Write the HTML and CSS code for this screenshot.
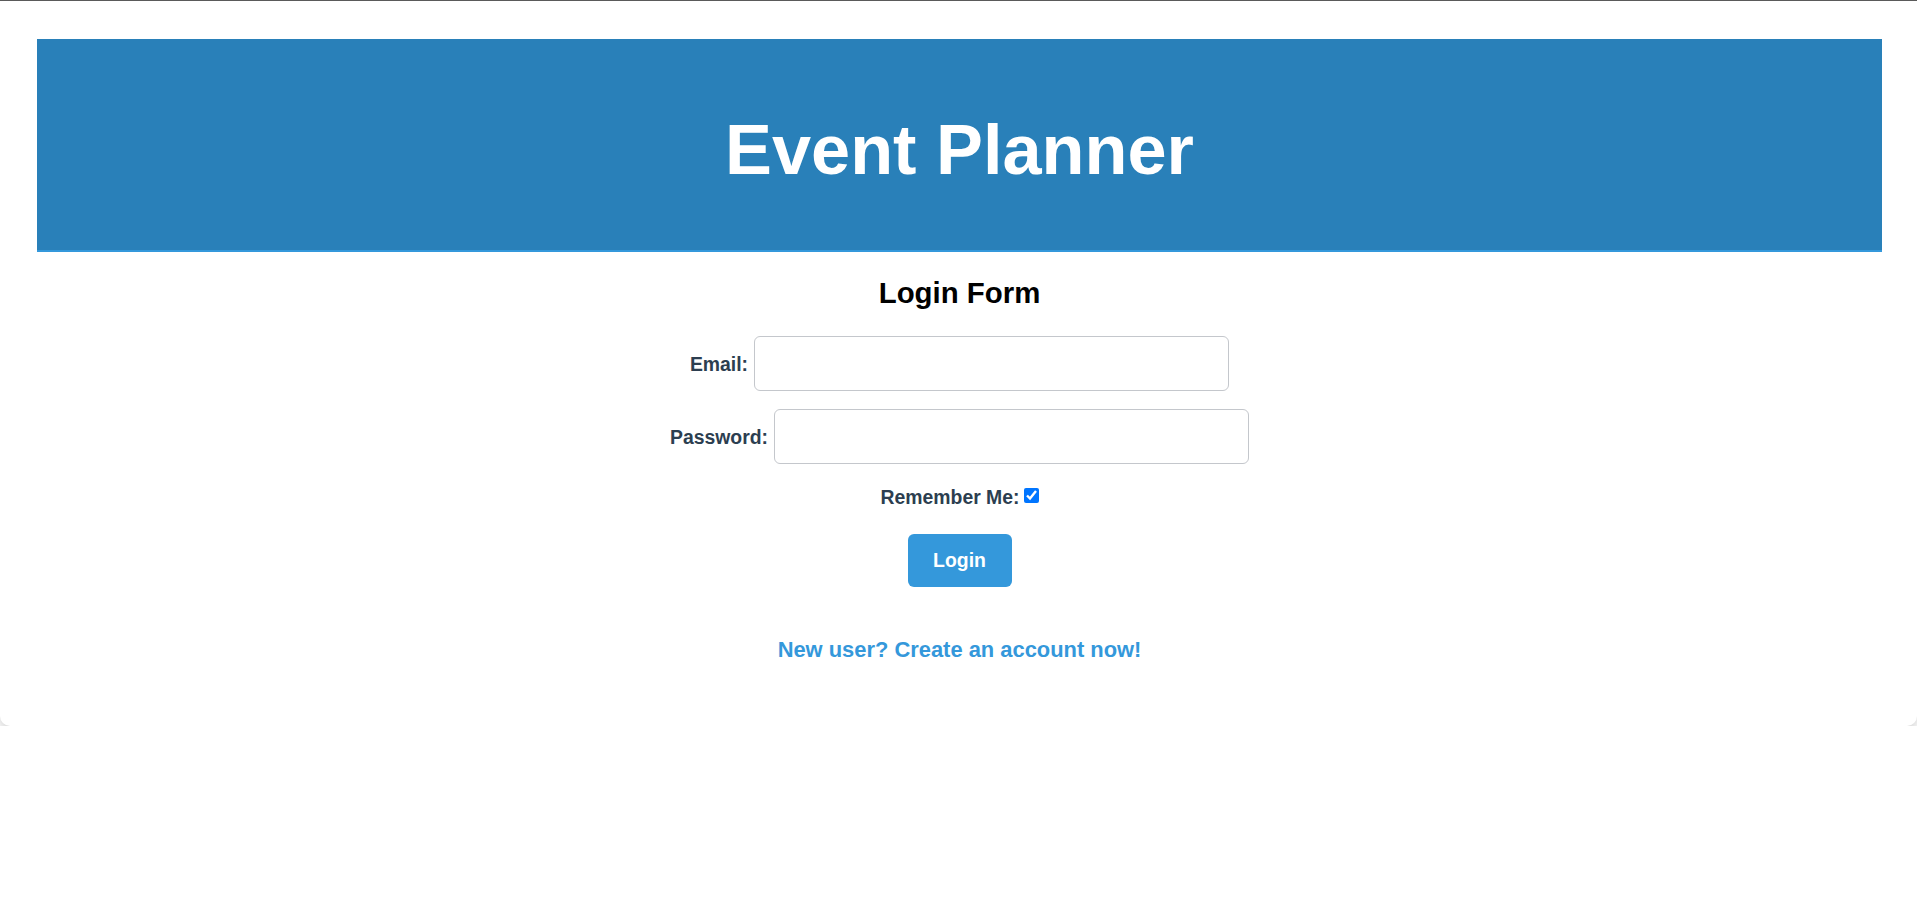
FILE: index.html
```html
<!DOCTYPE html>
<html lang="en">
<head>
<meta charset="utf-8">
<title>Event Planner</title>
<link rel="stylesheet" href="styles.css">
</head>
<body>
<div class="card">
  <header class="banner">
    <h1 class="title">Event Planner</h1>
  </header>
  <h2 class="form-title">Login Form</h2>
  <form class="login-form">
    <div class="row">
      <label class="label" for="email">Email:</label>
      <input class="field" type="email" id="email">
    </div>
    <div class="row">
      <label class="label" for="password">Password:</label>
      <input class="field" type="password" id="password">
    </div>
    <div class="row row-check">
      <label class="label" for="remember">Remember Me:</label>
      <input class="check" type="checkbox" id="remember" checked>
    </div>
    <div class="row row-btn">
      <button class="btn" type="button">Login</button>
    </div>
  </form>
  <p class="signup"><a class="signup-link" href="#">New user? Create an account now!</a></p>
</div>
</body>
</html>
```

FILE: styles.css
```css
html, body {
  margin: 0;
  padding: 0;
  background: #ffffff;
}
body {
  border-top: 1px solid #5a5a5a;
  font-family: "Liberation Sans", Arial, sans-serif;
  font-size: 19.4px;
}
.card {
  background: #ffffff;
  border-radius: 0 0 10px 10px;
  box-shadow: 0 4px 12px rgba(0, 0, 0, 0.2);
  padding: 38px 35px 64px 37px;
}
.banner {
  background: #2980b9;
  border-bottom: 2px solid #3498db;
  padding: 71px 0 60px;
  text-align: center;
}
.title {
  margin: 0;
  color: #ffffff;
  font-size: 70.3px;
  line-height: 80px;
  font-weight: bold;
}
.form-title {
  margin: 24px 0 0;
  text-align: center;
  font-size: 29.4px;
  line-height: 34px;
  font-weight: bold;
  color: #000000;
}
.login-form {
  margin: 26px 0 0;
  display: flex;
  flex-direction: column;
  align-items: center;
}
.row {
  display: flex;
  align-items: center;
  justify-content: center;
  gap: 6px;
  margin-bottom: 18px;
}
.label {
  color: #2c3e50;
  font-weight: bold;
  line-height: 22px;
}
.field {
  box-sizing: border-box;
  width: 475px;
  height: 55px;
  border: 1px solid #c4c7cc;
  border-radius: 6px;
  padding: 0 10px;
  font-size: 19px;
  margin: 0;
  background: #fff;
}
.row-check {
  margin-top: 4px;
  gap: 4px;
  margin-bottom: 26px;
}
.check {
  width: 15px;
  height: 15px;
  margin: 0 0 3px 0;
}
.row-btn {
  margin-bottom: 0;
}
.btn {
  width: 104px;
  height: 53px;
  border: none;
  border-radius: 6px;
  background: #3498db;
  color: #ffffff;
  font-family: "Liberation Sans", Arial, sans-serif;
  font-size: 19.4px;
  font-weight: bold;
  cursor: pointer;
}
.signup {
  margin: 50px 0 0;
  text-align: center;
  font-size: 21.9px;
  line-height: 25px;
}
.signup-link {
  color: #3498db;
  font-weight: bold;
  text-decoration: none;
}
```
